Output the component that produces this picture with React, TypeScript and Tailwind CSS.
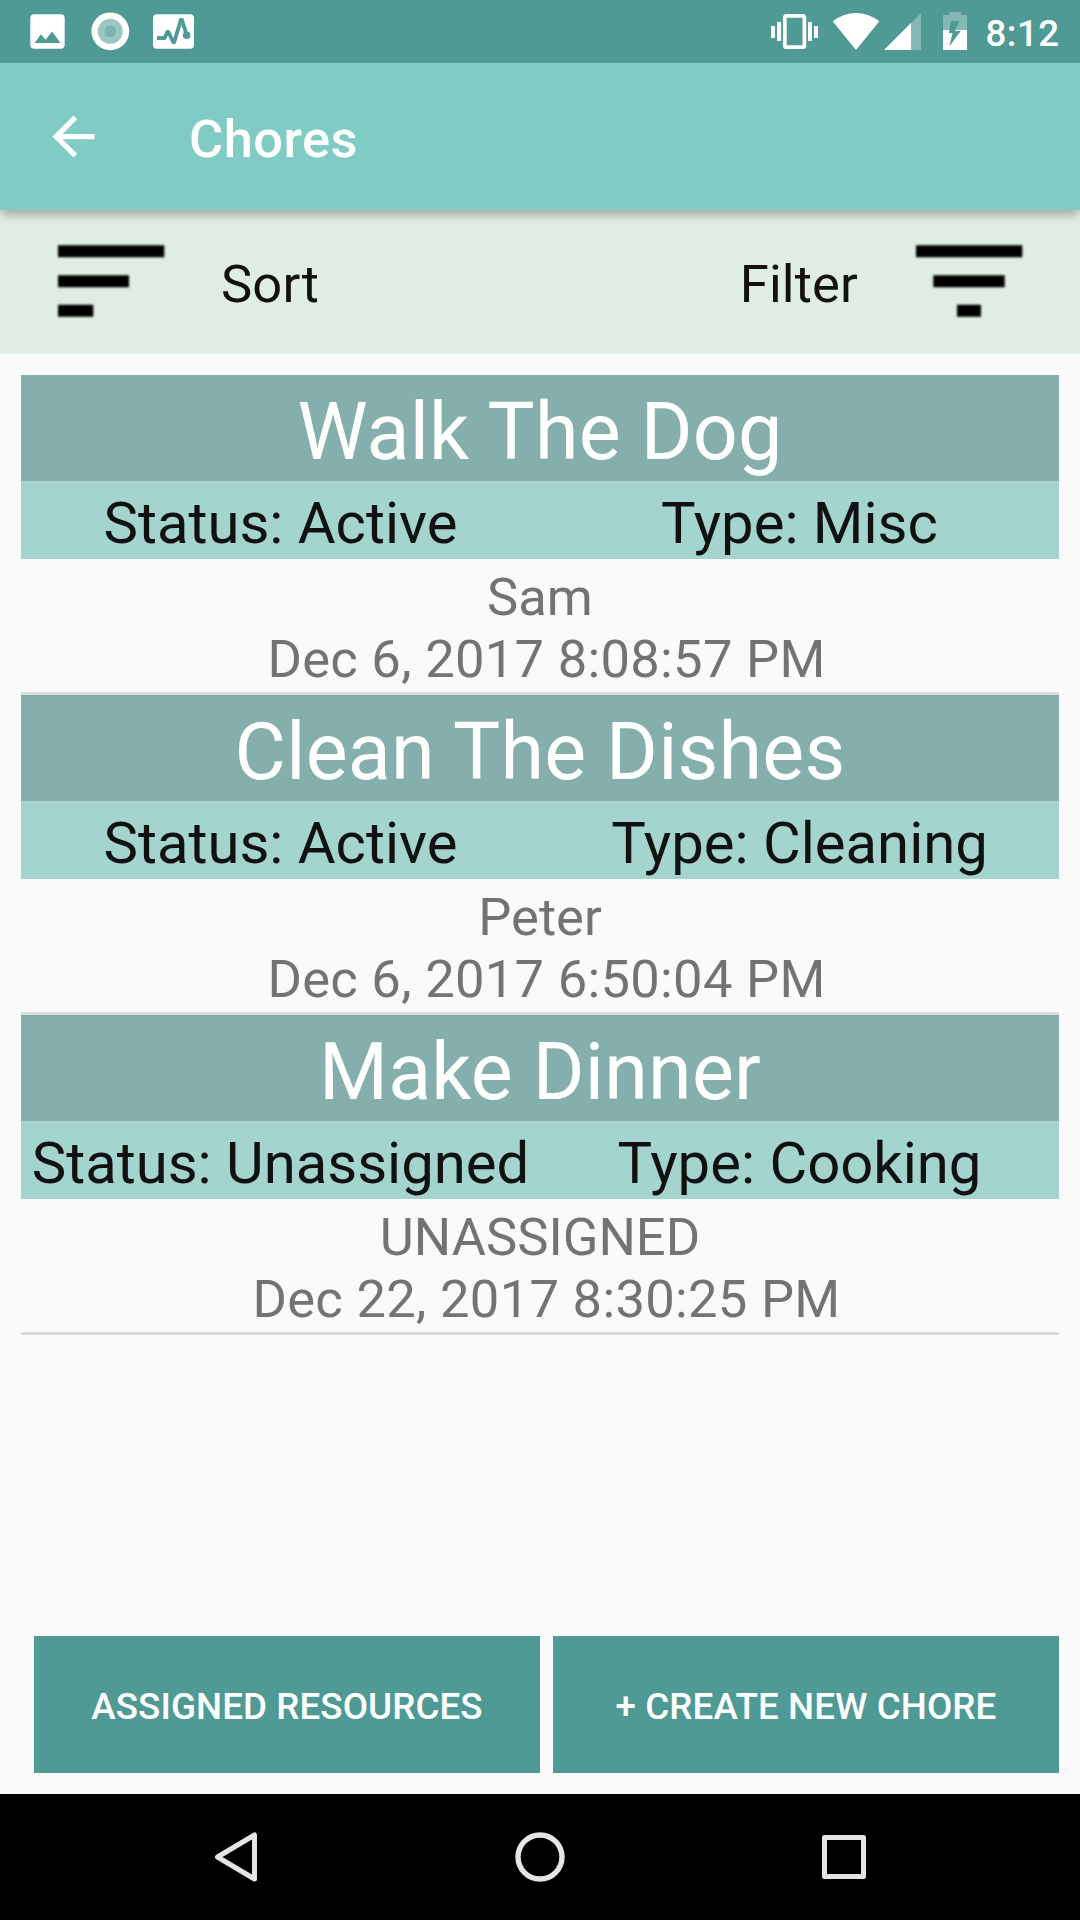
import React from "react";

type Chore = {
  title: string;
  status: string;
  type: string;
  assignee: string;
  due: string;
};

const chores: Chore[] = [
  { title: "Walk The Dog", status: "Active", type: "Misc", assignee: "Sam", due: "Dec 6, 2017 8:08:57 PM" },
  { title: "Clean The Dishes", status: "Active", type: "Cleaning", assignee: "Peter", due: "Dec 6, 2017 6:50:04 PM" },
  { title: "Make Dinner", status: "Unassigned", type: "Cooking", assignee: "UNASSIGNED", due: "Dec 22, 2017 8:30:25 PM" },
];

function NotificationIcons() {
  return (
    <svg className="h-[63px] w-[180px]" viewBox="24 0 180 63" fill="none">
      <rect x="30.3" y="14.3" width="34.4" height="34.4" rx="4" fill="#fff" />
      <path d="M34.4 43 41 34.2l4.6 5.6L52 31.5 60.6 43z" fill="#4f9a94" />
      <circle cx="110.3" cy="31.3" r="18.9" fill="#fff" />
      <circle cx="110.3" cy="31.3" r="12.5" fill="#9bc6c2" />
      <circle cx="110.3" cy="31.3" r="5.8" fill="#7ab2ad" />
      <rect x="153" y="14.3" width="41" height="34.4" rx="4" fill="#fff" />
      <path d="M157 38h7.8l2.4-6h1.2l4.8 10.3h1L180.8 20h1.2l4.6 15" stroke="#4f9a94" strokeWidth="3.8" strokeLinejoin="round" />
      <circle cx="186.6" cy="35.2" r="3.8" fill="#4f9a94" />
    </svg>
  );
}

function SystemIcons() {
  return (
    <svg className="h-[63px] w-[200px]" viewBox="770 0 200 63" fill="none">
      <rect x="784.8" y="15.8" width="19.6" height="31.4" rx="2" stroke="#fff" strokeWidth="3.8" />
      <path d="M771 26h4v12h-4zM777 22h4v19h-4zM808 22h4v19h-4zM814 26h4v12h-4z" fill="#fff" />
      <path d="M856 50 832.7 21.3a37 37 0 0 1 46.6 0z" fill="#fff" />
      <path d="M884 50h37V13z" fill="#fff" fillOpacity=".3" />
      <path d="M884 50h27V23z" fill="#fff" />
      <path d="M943 30V15h6v-3h12v3h6v15z" fill="#fff" fillOpacity=".3" />
      <path d="M943 30h24v20h-24z" fill="#fff" />
      <path d="M951 21h8.5l-4.6 10h5.8L949.3 46.5 952.6 33h-3.8z" fill="#4f9a94" />
    </svg>
  );
}

function StatusBar() {
  return (
    <div className="relative z-20 flex h-[63px] items-center justify-between bg-[#4f9a94] pl-6">
      <NotificationIcons />
      <div className="flex w-[310px] items-center">
        <SystemIcons />
        <span className="ml-[15.5px] pt-1 text-[36.75px] leading-[42px] font-medium tracking-[0.4px]">8:12</span>
      </div>
    </div>
  );
}

function AppBar() {
  return (
    <header className="relative z-10 flex h-[147px] items-center bg-[#80cbc4] pl-[42px] shadow-[0_5px_10px_-1px_rgba(0,0,0,0.32)]">
      <svg className="size-[63px]" viewBox="0 0 24 24" fill="#fff">
        <path d="M20 11H7.83l5.59-5.59L12 4l-8 8 8 8 1.41-1.41L7.83 13H20v-2z" />
      </svg>
      <h1 className="ml-[84px] pt-1 text-[52.5px] leading-[62px] font-medium tracking-[0.4px]">Chores</h1>
    </header>
  );
}

function SortFilterBar() {
  return (
    <div className="flex h-36 items-center justify-between bg-[#dfede2] px-[52px] text-[52.5px] leading-[62px] tracking-[0.15px] text-[#111]">
      <button className="flex items-center">
        <svg className="h-[84px] w-[118px] blur-[0.8px]" viewBox="52 240 118 84">
          <path d="M58 245.3h106.3v12H58zM58 275.3h71v12H58zM58 304.7h35.3v12H58z" />
        </svg>
        <span className="ml-[51px] pt-[3px]">Sort</span>
      </button>
      <button className="flex items-center">
        <span className="mr-[52px] pt-[3px]">Filter</span>
        <svg className="h-[84px] w-[118px] blur-[0.8px]" viewBox="910 240 118 84">
          <path d="M916 245.3h106.3v12H916zM933.3 275.3h71.4v12h-71.4zM957 304.7h24v12h-24z" />
        </svg>
      </button>
    </div>
  );
}

function ChoreItem({ chore }: { chore: Chore }) {
  return (
    <li className="border-b-[3px] border-[#dadada] text-center">
      <h2 className="bg-[#84afac] pt-2 text-[79px] leading-[98px] tracking-[0.22px]">{chore.title}</h2>
      <div className="grid grid-cols-2 bg-[#a3d4cd] pt-1.5 text-[58px] leading-[72px] whitespace-nowrap text-[#111]">
        <span>Status: {chore.status}</span>
        <span>Type: {chore.type}</span>
      </div>
      <div className="pt-[7px] pb-0.5 text-[52.5px] leading-[62px] text-[#737373]">
        <p>{chore.assignee}</p>
        <p className="pl-[13px] tracking-[0.3px]">{chore.due}</p>
      </div>
    </li>
  );
}

function NavigationBar() {
  return (
    <nav className="flex h-[126px] items-center justify-center gap-[240px] bg-black">
      <svg className="size-16" viewBox="0 0 64 64" fill="none" stroke="#e5e5e5" strokeWidth="5" strokeLinejoin="round">
        <path d="M13.5 32 50.5 10v44z" />
      </svg>
      <svg className="size-16" viewBox="0 0 64 64" fill="none" stroke="#e5e5e5" strokeWidth="5.4">
        <circle cx="32" cy="32" r="22" />
      </svg>
      <svg className="size-16" viewBox="0 0 64 64" fill="none" stroke="#e5e5e5" strokeWidth="5" strokeLinejoin="round">
        <rect x="12.5" y="12.5" width="39" height="39" />
      </svg>
    </nav>
  );
}

export default function App() {
  return (
    <div className="flex h-[1920px] w-[1080px] flex-col overflow-hidden bg-[#fafafa] font-[Roboto,sans-serif] text-white">
      <StatusBar />
      <AppBar />
      <SortFilterBar />
      <main className="flex flex-1 flex-col justify-between p-[21px]">
        <ul>
          {chores.map((chore) => (
            <ChoreItem key={chore.title} chore={chore} />
          ))}
        </ul>
        <div className="ml-[13px] grid h-[137px] grid-cols-2 gap-[13px] text-[36.75px] leading-[42px] font-medium tracking-[0.08px]">
          <button className="bg-[#4f9a94] pt-1">ASSIGNED RESOURCES</button>
          <button className="bg-[#4f9a94] pt-1">+ CREATE NEW CHORE</button>
        </div>
      </main>
      <NavigationBar />
    </div>
  );
}
